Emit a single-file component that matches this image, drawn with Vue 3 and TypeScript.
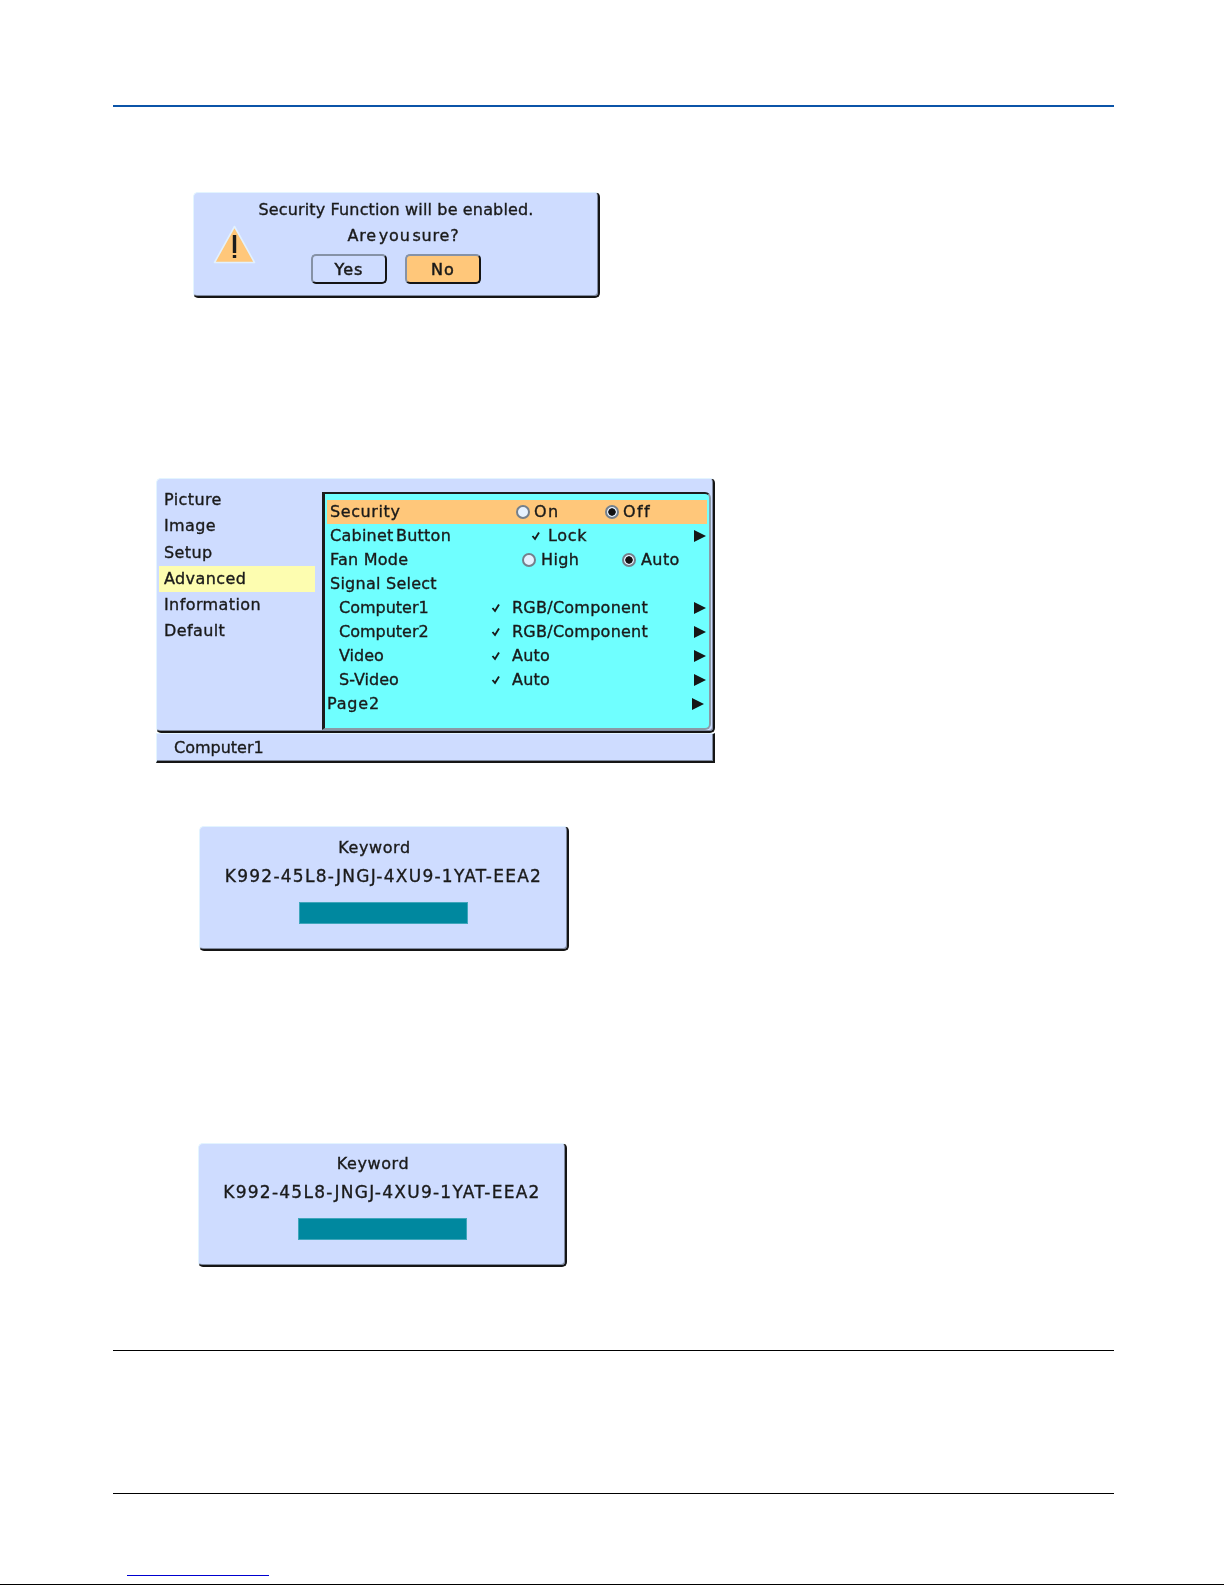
<script setup lang="ts">
type Row = { label: string; kind: string; a?: string; b?: string; checkVal?: string; arrow?: boolean; hot?: boolean };

const sections: string[] = ['Picture', 'Image', 'Setup', 'Advanced', 'Information', 'Default'];
const rows: Row[] = [
  { label: 'Security', kind: 'r-security', a: 'On', b: 'Off', hot: true },
  { label: 'Cabinet Button', kind: 'r-lock', checkVal: 'Lock', arrow: true },
  { label: 'Fan Mode', kind: 'r-fan', a: 'High', b: 'Auto' },
  { label: 'Signal Select', kind: 'r-plain' },
  { label: 'Computer1', kind: 'r-sub', checkVal: 'RGB/Component', arrow: true },
  { label: 'Computer2', kind: 'r-sub', checkVal: 'RGB/Component', arrow: true },
  { label: 'Video', kind: 'r-sub', checkVal: 'Auto', arrow: true },
  { label: 'S-Video', kind: 'r-sub', checkVal: 'Auto', arrow: true },
  { label: 'Page2', kind: 'r-page', arrow: true },
];
</script>

<template>
  <div class="page">
    <div class="rule-top"></div>

    <section class="panel dialog">
      <svg class="warn" width="43" height="39" viewBox="0 0 43 39" aria-hidden="true">
        <polygon points="21.5,1.5 41.5,37.5 1.5,37.5" fill="#ffc77a" stroke="#e2f1ff" stroke-width="1.6" stroke-linejoin="round" />
        <rect x="19.8" y="10" width="3.4" height="18" fill="#1c1c1c" />
        <rect x="19.8" y="30" width="3.4" height="3" fill="#1c1c1c" />
      </svg>
      <div class="message">
        <div class="line">Security Function will be enabled.</div>
        <div class="line sure">Are you sure?</div>
        <div class="buttons">
          <button class="btn" type="button">Yes</button>
          <button class="btn btn-on" type="button">No</button>
        </div>
      </div>
      <span></span>
    </section>

    <section class="menu">
      <div class="panel menu-main">
        <ul class="sections">
          <li v-for="s in sections" :key="s" :class="{ current: s === 'Advanced' }">{{ s }}</li>
        </ul>
        <div class="settings">
          <div v-for="r in rows" :key="r.label" class="row" :class="[r.kind, { hot: r.hot }]">
            <span class="label">{{ r.label }}</span>
            <template v-if="r.a">
              <span class="choice"><i class="radio"></i>{{ r.a }}</span>
              <span class="choice"><i class="radio radio-on"></i>{{ r.b }}</span>
            </template>
            <template v-if="r.checkVal">
              <svg class="check" width="10" height="10" viewBox="0 0 10 10" aria-hidden="true">
                <polyline points="1.5,5 4,8 8,1.5" fill="none" stroke="#1a1a1a" stroke-width="1.9" />
              </svg>
              <span>{{ r.checkVal }}</span>
            </template>
            <svg v-if="r.arrow" class="arrow" width="12" height="12" viewBox="0 0 12 12" aria-hidden="true">
              <polygon points="0,0 12,6 0,12" fill="#161616" />
            </svg>
          </div>
        </div>
      </div>
      <div class="panel status">Computer1</div>
    </section>

    <section class="panel keyword kw-first">
      <div class="kw-title">Keyword</div>
      <div class="kw-code">K992-45L8-JNGJ-4XU9-1YAT-EEA2</div>
      <div class="kw-bar"></div>
    </section>

    <section class="panel keyword kw-second">
      <div class="kw-title">Keyword</div>
      <div class="kw-code">K992-45L8-JNGJ-4XU9-1YAT-EEA2</div>
      <div class="kw-bar"></div>
    </section>

    <div class="rule rule-mid"></div>
    <div class="rule rule-foot"></div>
    <div class="link-line"></div>
    <div class="rule-end"></div>
  </div>
</template>

<style scoped>
.page {
  width: 1225px;
  height: 1585px;
  box-sizing: border-box;
  padding: 105px 111px 0 113px;
  overflow: hidden;
  background: #fff;
  font-family: "DejaVu Sans", sans-serif;
  font-size: 16px;
  color: #1a1a1a;
}
.rule-top { height: 2px; background: #0b54a8; }
.rule { height: 1px; background: #000; }
.rule-mid { margin-top: 83px; }
.rule-foot { margin-top: 142px; }
.link-line { height: 1px; width: 142px; margin: 81px 0 0 14px; background: #0000d0; }
.rule-end {
  position: relative;
  height: 1px;
  margin: 8px -110px 0 -113px;
  background: #000;
}

.panel {
  box-sizing: border-box;
  background: #cedcff;
  border: 1px solid #e3f4ff;
  border-right: 2px solid #151515;
  border-bottom: 2px solid #151515;
  border-radius: 5px;
  box-shadow: inset -1px -1px 0 #7f8aa0;
  filter: blur(0.3px);
  -webkit-text-stroke: 0.35px #1a1a1a;
}

.dialog {
  display: grid;
  grid-template-columns: 61px 1fr 61px;
  width: 407px;
  height: 106px;
  margin: 85px 0 0 80px;
}
.warn { margin: 32px 0 0 19px; }
.message { display: flex; flex-direction: column; align-items: center; padding-top: 4px; letter-spacing: 0.15px; }
.line { line-height: 26px; white-space: nowrap; }
.sure { padding-left: 15px; word-spacing: -4px; letter-spacing: 0.8px; }
.buttons { display: flex; gap: 18px; margin-top: 5px; }
.btn {
  box-sizing: border-box;
  width: 76px;
  height: 30px;
  padding: 0;
  background: #cedcff;
  border: 2px solid #8692a6;
  border-right: 2px solid #151515;
  border-bottom: 2px solid #151515;
  border-radius: 5px;
  font: inherit;
  letter-spacing: 1px;
  color: inherit;
  -webkit-text-stroke: 0.5px #1a1a1a;
}
.btn-on { background: #ffc77a; }

.menu { margin: 180px 0 0 43px; width: 559px; }
.menu-main { display: flex; height: 255px; }
.sections {
  width: 165px;
  flex: none;
  margin: 0;
  padding: 8px 0 0 2px;
  list-style: none;
  box-sizing: border-box;
  display: grid;
  grid-auto-rows: 26px;
  gap: 0.25px;
  align-content: start;
  letter-spacing: 0.4px;
}
.sections li { width: 156px; padding-left: 5px; box-sizing: border-box; line-height: 26px; }
.sections .current { background: #fdfdb0; }
.settings {
  box-sizing: border-box;
  width: 389px;
  height: 238px;
  margin-top: 13px;
  padding: 6px 0 0 2px;
  background: #6fffff;
  border-top: 2px solid #1c1c1c;
  border-left: 3px solid #1c1c1c;
  border-right: 2px solid #8a9aa6;
  border-bottom: 2px solid #8a9aa6;
  border-top-right-radius: 6px;
  border-bottom-right-radius: 6px;
}
.row {
  display: grid;
  align-items: center;
  height: 24.05px;
  margin-right: 2px;
  padding-left: 3px;
  line-height: 24px;
  white-space: nowrap;
  letter-spacing: 0.25px;
}
.hot { background: #ffc77a; height: 23.5px; margin-bottom: 0.55px; }
.r-security { grid-template-columns: 186px 89px 1fr; }
.r-security .label { letter-spacing: 0.6px; }
.r-security .choice { letter-spacing: 1.4px; gap: 4px; }
.r-lock { grid-template-columns: 201px 17px 146px 12px; }
.r-lock .label { word-spacing: -3px; }
.r-lock span:last-of-type { letter-spacing: 0.7px; }
.r-fan { grid-template-columns: 192px 100px 1fr; }
.r-fan .choice { gap: 5px; letter-spacing: 0.4px; }
.r-plain { grid-template-columns: 1fr; }
.r-sub { padding-left: 12px; grid-template-columns: 152px 21px 182px 12px; }
.r-sub .label { letter-spacing: 0; }
.r-page { padding-left: 0; grid-template-columns: 365px 12px; }
.r-page .label { letter-spacing: 0.8px; }
.choice { display: inline-flex; align-items: center; gap: 3px; }
.radio {
  box-sizing: border-box;
  width: 14px;
  height: 14px;
  border: 2px solid #75808c;
  border-radius: 50%;
  background: #e6f2ff;
}
.radio-on { background: radial-gradient(circle, #111 0 3.4px, #e6f2ff 4px); }

.status { height: 30px; padding-left: 17px; line-height: 28px; border-radius: 0; }

.keyword { display: flex; flex-direction: column; align-items: center; }
.kw-first { width: 370px; height: 125px; margin: 63px 0 0 86px; padding-top: 7px; }
.kw-second { width: 369px; height: 124px; margin: 192px 0 0 85px; padding-top: 6px; }
.kw-title, .kw-code { line-height: 27px; white-space: nowrap; }
.kw-title { margin-right: 18px; letter-spacing: 0.6px; }
.kw-code { margin-top: 2px; font-size: 17px; letter-spacing: 1.25px; }
.kw-bar {
  box-sizing: border-box;
  width: 169px;
  height: 22px;
  margin-top: 12px;
  background: #00889f;
  border: 1px solid #3fa6bb;
}
</style>
